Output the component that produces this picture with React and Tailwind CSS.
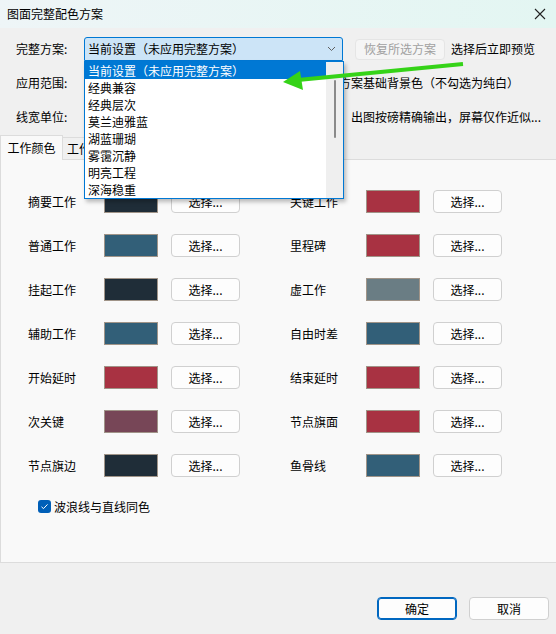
import React from 'react';

const FONT = "font-['Noto_Sans_CJK_SC','Noto_Sans',sans-serif]";

const SCHEMES = ['当前设置（未应用完整方案）', '经典兼容', '经典层次', '莫兰迪雅蓝', '湖蓝珊瑚', '雾霭沉静', '明亮工程', '深海稳重'];

const DARK = '#1f2d38';
const BLUE = '#325f78';
const RED = '#a83242';

const LEFT = [
  ['摘要工作', DARK],
  ['普通工作', BLUE],
  ['挂起工作', DARK],
  ['辅助工作', BLUE],
  ['开始延时', RED],
  ['次关键', '#774657'],
  ['节点旗边', DARK],
];
const RIGHT = [
  ['关键工作', RED],
  ['里程碑', RED],
  ['虚工作', '#6a7d84'],
  ['自由时差', BLUE],
  ['结束延时', RED],
  ['节点旗面', RED],
  ['鱼骨线', BLUE],
];

function ColorRow({ label, color }) {
  return (
    <div className="flex items-center h-[23px]">
      <span className="w-[76px] text-[12px] leading-none text-black">{label}</span>
      <div className="w-[54px] h-[23px] border border-[#a09488]" style={{ backgroundColor: color }} />
      <button className="ml-[13px] w-[69px] h-[23px] rounded-[4px] border border-[#d0d0d0] bg-[#fdfdfd] text-[12px] leading-none text-black">选择...</button>
    </div>
  );
}

function Dropdown() {
  return (
    <div className="absolute left-[84px] top-[61px] w-[260px] h-[138px] bg-white border border-[#0078d4] shadow-[2px_3px_4px_rgba(0,0,0,0.25)] flex">
      <div className="flex-1 flex flex-col">
        {SCHEMES.map((s, i) => (
          <div key={s} className={`h-[17px] pl-[3px] flex items-center text-[12px] leading-none ${i === 0 ? 'bg-[#0078d4] text-white' : 'text-black'}`}>{s}</div>
        ))}
      </div>
      <div className="w-[17px] bg-[#efefef] flex justify-center pt-[18px]">
        <div className="w-[2px] h-[58px] bg-[#8a8a8a] rounded-full" />
      </div>
    </div>
  );
}

export default function App() {
  return (
    <div className={`relative w-[556px] h-[634px] overflow-hidden bg-[#f0f0f0] ${FONT}`}>
      {/* title bar */}
      <div className="h-[28px] flex items-center justify-between pl-[7px] pr-[6px] bg-gradient-to-r from-[#eef5f7] to-[#e3f6f2]">
        <span className="text-[12px] leading-none text-black">图面完整配色方案</span>
        <svg width="12" height="12" viewBox="0 0 12 12" className="mr-[4px]">
          <path d="M1 1L11 11M11 1L1 11" stroke="#222" strokeWidth="1.1" />
        </svg>
      </div>

      {/* option rows */}
      <div className="pt-[9px] pl-[16px] flex flex-col gap-[10px]">
        <div className="h-[24px] flex items-center">
          <span className="w-[68px] text-[12px] leading-none">完整方案:</span>
          <div className="w-[259px] h-[24px] bg-[#cce4f7] border border-[#0078d4] rounded-t-[3px] flex items-center justify-between pl-[3px] pr-[6px]">
            <span className="text-[12px] leading-none">当前设置（未应用完整方案）</span>
            <svg width="9" height="6" viewBox="0 0 9 6"><path d="M1 1L4.5 4.5L8 1" stroke="#606060" fill="none" strokeWidth="1" /></svg>
          </div>
          <button className="ml-[12px] w-[90px] h-[21px] rounded-[4px] border border-[#e5e5e5] bg-[#f5f5f5] text-[12px] leading-none text-[#a0a0a0]">恢复所选方案</button>
          <span className="ml-[6px] text-[12px] leading-none">选择后立即预览</span>
        </div>
        <div className="h-[24px] flex items-center">
          <span className="w-[68px] text-[12px] leading-none">应用范围:</span>
          <div className="w-[200px] h-[22px] bg-white border border-[#d0d0d0] rounded-[3px]" />
          <div className="ml-[16px] w-[13px] h-[13px] rounded-[3px] border border-[#888] bg-white" />
          <span className="ml-[2px] text-[12px] leading-none">使用方案基础背景色（不勾选为纯白）</span>
        </div>
        <div className="h-[24px] flex items-center">
          <span className="w-[68px] text-[12px] leading-none">线宽单位:</span>
          <div className="w-[259px] h-[22px] bg-white border border-[#d0d0d0] rounded-[3px]" />
          <span className="ml-[8px] text-[12px] leading-none">出图按磅精确输出，屏幕仅作近似...</span>
        </div>
      </div>

      {/* tabs */}
      <div className="mt-[6px] flex items-end h-[24px]">
        <div className="h-[25px] w-[63px] -mb-px relative z-10 bg-[#f9f9f9] border border-b-0 border-[#dcdcdc] flex items-center justify-center text-[12px] leading-none">工作颜色</div>
        <div className="h-[22px] w-[70px] bg-[#f0f0f0] border border-l-0 border-b-0 border-[#dcdcdc] flex items-center pl-[4px] text-[12px] leading-none">工作线型</div>
      </div>
      <div className="h-[404px] w-[600px] bg-[#f9f9f9] border border-[#dcdcdc] pt-[30px] pl-[27px]">
        <div className="grid grid-cols-[212px_212px] gap-x-[50px] gap-y-[21px]">
          {LEFT.map((l, i) => (
            <React.Fragment key={l[0]}>
              <ColorRow label={l[0]} color={l[1]} />
              <ColorRow label={RIGHT[i][0]} color={RIGHT[i][1]} />
            </React.Fragment>
          ))}
        </div>
        <div className="mt-[23px] ml-[10px] flex items-center">
          <div className="w-[13px] h-[13px] rounded-[3px] bg-[#005fb8] flex items-center justify-center">
            <svg width="9" height="9" viewBox="0 0 9 9"><path d="M1.5 4.8L3.5 6.6L7.5 2.4" stroke="white" fill="none" strokeWidth="1" /></svg>
          </div>
          <span className="ml-[3px] text-[12px] leading-none">波浪线与直线同色</span>
        </div>
      </div>

      {/* footer buttons */}
      <div className="flex justify-end gap-[12px] pr-[7px] pt-[34px]">
        <button className="w-[80px] h-[23px] rounded-[4px] border border-[#0067c0] shadow-[inset_0_0_0_1px_#0067c0] bg-[#fdfdfd] text-[12px] leading-none">确定</button>
        <button className="w-[80px] h-[23px] rounded-[4px] border border-[#d0d0d0] bg-[#fdfdfd] text-[12px] leading-none">取消</button>
      </div>

      <Dropdown />

      {/* green annotation arrow */}
      <svg className="absolute left-0 top-0 pointer-events-none" width="556" height="634">
        <path d="M463 64L298 80" stroke="#35d318" strokeWidth="4" />
        <polygon points="283,82 300,71 303,90" fill="#35d318" />
      </svg>
    </div>
  );
}
